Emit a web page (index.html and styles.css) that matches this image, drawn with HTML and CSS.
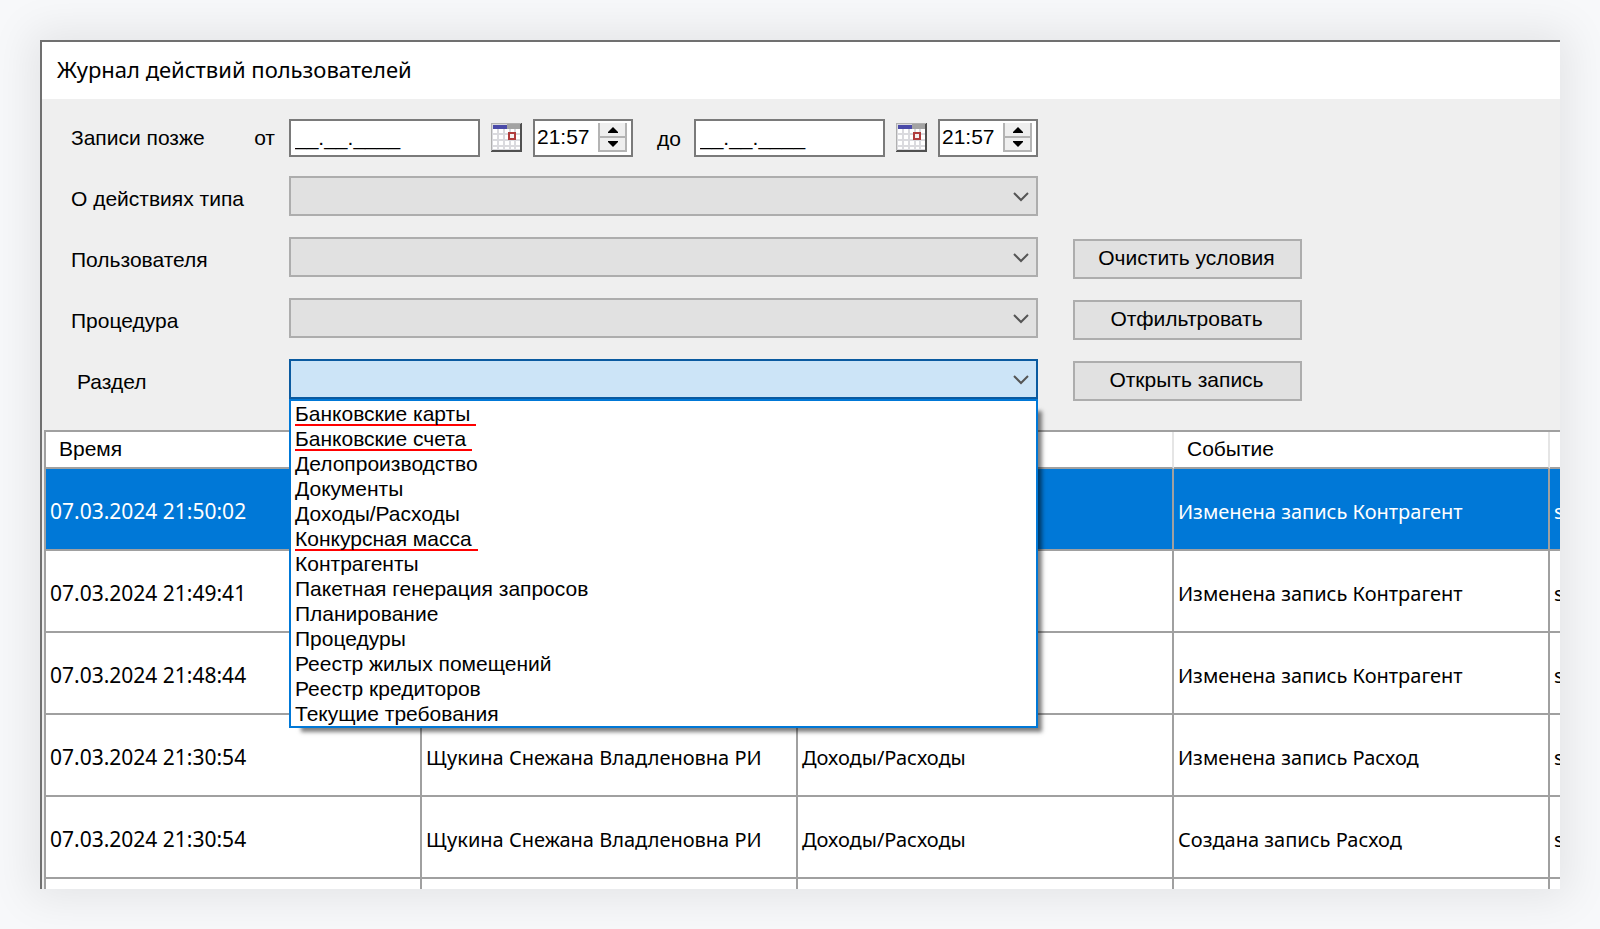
FILE: index.html
```html
<!DOCTYPE html>
<html lang="ru">
<head>
<meta charset="utf-8">
<title>Журнал действий пользователей</title>
<link rel="stylesheet" href="styles.css">
</head>
<body>
<svg class="defs" aria-hidden="true">
  <symbol id="calendar" viewBox="0 0 31 29">
    <rect width="31" height="29" fill="#505050"/>
    <path d="M0 0H30V1H1V28H0z" fill="#b0b0b0"/>
    <rect x="1" y="1" width="28" height="26" fill="#dadade"/>
    <rect x="2" y="2" width="14" height="4" fill="#4a4aa8"/>
    <rect x="16" y="1" width="13" height="5" fill="#a3a3a3"/>
    <path fill="#fff" d="M2 6h4v4H2zM8 6h4v4H8zM14 6h4v4h-4zM20 6h3v4h-3zM25 6h4v4h-4zM2 12h4v4H2zM8 12h4v4H8zM14 12h4v4h-4zM25 12h4v4h-4zM2 18h4v4H2zM8 18h4v4H8zM14 18h4v4h-4zM20 18h3v4h-3zM25 18h4v4h-4zM2 24h4v2H2zM8 24h4v2H8zM14 24h4v2h-4zM20 24h3v2h-3zM25 24h4v2h-4z"/>
    <rect x="18" y="10" width="6" height="6" fill="#f6f0f0" stroke="#b03c3c" stroke-width="2"/>
  </symbol>
  <symbol id="chevron" viewBox="0 0 16 10">
    <path d="M1 1l7 7 7-7" fill="none" stroke="#555" stroke-width="2"/>
  </symbol>
  <symbol id="up" viewBox="0 0 10 6"><path d="M5 0l5 5v1H0V5z"/></symbol>
  <symbol id="down" viewBox="0 0 10 6"><path d="M0 0h10v1L5 6 0 1z"/></symbol>
</svg>

<main class="window">
  <header class="titlebar"><h1>Журнал действий пользователей</h1></header>

  <form class="filters">
    <div class="row">
      <div class="caption"><span>Записи позже</span><label for="from">от</label></div>
      <div class="field period">
        <input class="mask" id="from" type="text" value="__.__.____">
        <button class="pick" type="button" aria-label="Выбрать дату"><svg><use href="#calendar"/></svg></button>
        <div class="time">
          <input type="text" value="21:57" aria-label="Время от">
          <div class="spin">
            <button type="button" aria-label="Больше"><svg><use href="#up"/></svg></button>
            <button type="button" aria-label="Меньше"><svg><use href="#down"/></svg></button>
          </div>
        </div>
        <label class="until" for="to">до</label>
        <input class="mask" id="to" type="text" value="__.__.____">
        <button class="pick" type="button" aria-label="Выбрать дату"><svg><use href="#calendar"/></svg></button>
        <div class="time">
          <input type="text" value="21:57" aria-label="Время до">
          <div class="spin">
            <button type="button" aria-label="Больше"><svg><use href="#up"/></svg></button>
            <button type="button" aria-label="Меньше"><svg><use href="#down"/></svg></button>
          </div>
        </div>
      </div>
    </div>
    <div class="row">
      <label class="caption" for="type">О действиях типа</label>
      <div class="field combo"><select id="type"><option></option></select><svg><use href="#chevron"/></svg></div>
    </div>
    <div class="row">
      <label class="caption" for="user">Пользователя</label>
      <div class="field combo"><select id="user"><option></option></select><svg><use href="#chevron"/></svg></div>
      <button class="action" type="button">Очистить условия</button>
    </div>
    <div class="row">
      <label class="caption" for="procedure">Процедура</label>
      <div class="field combo"><select id="procedure"><option></option></select><svg><use href="#chevron"/></svg></div>
      <button class="action" type="button">Отфильтровать</button>
    </div>
    <div class="row">
      <label class="caption indented" for="section">Раздел</label>
      <div class="field combo open">
        <select id="section"><option></option></select><svg><use href="#chevron"/></svg>
        <ul class="list" role="listbox" aria-label="Раздел">
          <li role="option"><span class="marked">Банковские карты</span></li>
          <li role="option"><span class="marked">Банковские счета</span></li>
          <li role="option">Делопроизводство</li>
          <li role="option">Документы</li>
          <li role="option">Доходы/Расходы</li>
          <li role="option"><span class="marked">Конкурсная масса</span></li>
          <li role="option">Контрагенты</li>
          <li role="option">Пакетная генерация запросов</li>
          <li role="option">Планирование</li>
          <li role="option">Процедуры</li>
          <li role="option">Реестр жилых помещений</li>
          <li role="option">Реестр кредиторов</li>
          <li role="option">Текущие требования</li>
        </ul>
      </div>
      <button class="action" type="button">Открыть запись</button>
    </div>
  </form>

  <div class="grid">
    <table>
      <colgroup><col><col><col><col><col></colgroup>
      <thead>
        <tr><th>Время</th><th></th><th></th><th>Событие</th><th></th></tr>
      </thead>
      <tbody>
        <tr class="selected"><td class="date">07.03.2024 21:50:02</td><td></td><td></td><td>Изменена запись Контрагент</td><td>s</td></tr>
        <tr><td class="date">07.03.2024 21:49:41</td><td></td><td></td><td>Изменена запись Контрагент</td><td>s</td></tr>
        <tr><td class="date">07.03.2024 21:48:44</td><td></td><td></td><td>Изменена запись Контрагент</td><td>s</td></tr>
        <tr><td class="date">07.03.2024 21:30:54</td><td>Щукина Снежана Владленовна РИ</td><td>Доходы/Расходы</td><td>Изменена запись Расход</td><td>s</td></tr>
        <tr><td class="date">07.03.2024 21:30:54</td><td>Щукина Снежана Владленовна РИ</td><td>Доходы/Расходы</td><td>Создана запись Расход</td><td>s</td></tr>
        <tr><td></td><td></td><td></td><td></td><td></td></tr>
      </tbody>
    </table>
  </div>
</main>
</body>
</html>
```
FILE: styles.css
```css
* { box-sizing: border-box; }

body {
  display: flex;
  height: 100vh;
  margin: 0;
  padding: 40px;
  background: #f7f8fa;
  color: #000;
  font: 21px/25px "Liberation Sans", Arial, sans-serif;
}

.defs { position: absolute; width: 0; height: 0; }
svg { display: block; }
input, select, button { margin: 0; font: inherit; color: inherit; border-radius: 0; }

.window {
  flex: 1;
  display: flex;
  flex-direction: column;
  min-width: 0;
  overflow: hidden;
  border: solid #707070;
  border-width: 2px 0 0 2px;
  background: #efefef;
  box-shadow: 0 0 40px 10px rgba(0, 0, 0, 0.08);
}

.titlebar { padding: 13px 15px 16px; background: #fff; }
.titlebar h1 {
  margin: 0;
  font: 22px/28px "Noto Sans", "Open Sans", sans-serif;
}

/* Filter form */
.filters { padding: 5px 29px 21px; }
.row {
  display: grid;
  grid-template-columns: 218px 749px auto;
  justify-content: start;
  align-items: center;
  height: 61px;
}
.caption { padding-top: 6px; }
div.caption { display: flex; justify-content: space-between; padding-right: 14px; }
.indented { padding-left: 6px; }

.period { display: flex; align-items: center; padding-top: 6px; }
.mask {
  width: 191px;
  height: 38px;
  padding: 0 4px;
  border: 2px solid #7a7a7a;
  background: #fff;
}
.pick {
  margin: 0 11px;
  padding: 0;
  border: 0;
  background: none;
}
.pick svg { width: 31px; height: 29px; }
.time {
  display: flex;
  align-items: center;
  width: 100px;
  height: 38px;
  border: 2px solid #7a7a7a;
  background: #fff;
}
.time input {
  flex: 1;
  min-width: 0;
  padding: 0 2px 2px;
  border: 0;
  background: none;
}
.spin {
  display: flex;
  flex-direction: column;
  width: 29px;
  margin-right: 4px;
  border: 2px solid #b4b4b4;
  border-top: 0;
}
.spin button {
  display: flex;
  align-items: center;
  justify-content: center;
  height: 13px;
  padding: 0;
  border: 0;
  background: #efefef;
}
.spin button + button { border-top: 2px solid #b4b4b4; height: 14px; }
.spin svg { width: 10px; height: 6px; }
.until { flex: 1; padding: 2px 0 0 24px; }

.combo { position: relative; }
.combo select {
  display: block;
  width: 100%;
  height: 40px;
  appearance: none;
  border: 2px solid #adadad;
  background: #e1e1e1;
}
.combo > svg {
  position: absolute;
  top: 16px;
  right: 9px;
  width: 16px;
  height: 10px;
  pointer-events: none;
}
.combo.open select { border-color: #0a5aa0; background: #cce4f7; }

.list {
  position: absolute;
  z-index: 1;
  top: 100%;
  left: 0;
  right: 0;
  margin: 0;
  padding: 0;
  list-style: none;
  border: 2px solid #0078d7;
  background: #fff;
  box-shadow: 8px 8px 4px -4px rgba(0, 0, 0, 0.5);
}
.list li { height: 25px; padding-left: 4px; }
.marked { display: inline-block; height: 25px; padding-right: 6px; border-bottom: 2px solid #f00; }

.action {
  height: 40px;
  margin: 4px 0 0 35px;
  padding: 0 2px 2px 0;
  width: 229px;
  border: 2px solid #adadad;
  background: #e1e1e1;
}

/* Journal grid */
.grid { margin-left: 2px; overflow: hidden; background: #fff; }
table {
  width: 1880px;
  table-layout: fixed;
  border-collapse: separate;
  border-spacing: 0;
  border: solid #a0a0a0;
  border-width: 2px 0 0 2px;
}
col { width: 376px; }
th {
  height: 37px;
  padding: 0 13px 2px;
  border-right: 2px solid #e5e5e5;
  border-bottom: 2px solid #a0a0a0;
  font-weight: normal;
  text-align: left;
}
td {
  height: 82px;
  padding: 4px 4px 0;
  border: solid #a0a0a0;
  border-width: 0 2px 2px 0;
  font: 20px/27px "Noto Sans", Tahoma, sans-serif;
  white-space: nowrap;
}
td.date { font-size: 21px; }
.selected td { background: #0078d7; color: #fff; }
```
